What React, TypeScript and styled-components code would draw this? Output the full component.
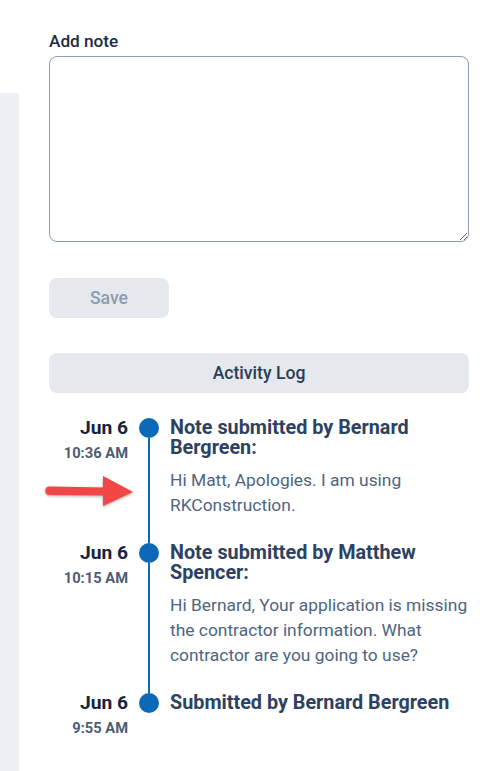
import styled, { createGlobalStyle } from 'styled-components';

const GlobalStyle = createGlobalStyle`
  body {
    margin: 0;
    background: #ffffff;
    font-family: Roboto, "Liberation Sans", Arial, sans-serif;
  }
`;

type Entry = {
  date: string;
  time: string;
  title: string;
  body?: string;
};

const entries: Entry[] = [
  {
    date: 'Jun 6',
    time: '10:36 AM',
    title: 'Note submitted by Bernard Bergreen:',
    body: 'Hi Matt, Apologies. I am using RKConstruction.',
  },
  {
    date: 'Jun 6',
    time: '10:15 AM',
    title: 'Note submitted by Matthew Spencer:',
    body: 'Hi Bernard, Your application is missing the contractor information. What contractor are you going to use?',
  },
  {
    date: 'Jun 6',
    time: '9:55 AM',
    title: 'Submitted by Bernard Bergreen',
  },
];

const App = () => {
  return (
    <Page>
      <GlobalStyle />
      <SideStrip />
      <Main>
        <Label htmlFor="note">Add note</Label>
        <NoteArea id="note" />
        <SaveButton type="button" disabled>
          Save
        </SaveButton>
        <LogHeader>Activity Log</LogHeader>
        <Timeline>
          {entries.map((entry, index) => {
            const last = index === entries.length - 1;
            return (
              <Item key={index}>
                <When>
                  <DateText>{entry.date}</DateText>
                  <TimeText>{entry.time}</TimeText>
                </When>
                <Rail>
                  <Dot />
                  {!last && <RailLine />}
                </Rail>
                <Content $last={last}>
                  <Title>{entry.title}</Title>
                  {entry.body && <Body>{entry.body}</Body>}
                </Content>
              </Item>
            );
          })}
        </Timeline>
      </Main>
      <Arrow width="100" height="45" viewBox="0 0 100 45">
        <path d="M9 16.5 L66 17.5 L66 25.5 L9 25 A4.3 4.3 0 0 1 9 16.5 Z" fill="#f24545" />
        <path d="M63 6 L93 22 L63 36 Z" fill="#f24545" />
      </Arrow>
    </Page>
  );
};

const Page = styled.div`
  position: relative;
  display: flex;
  min-height: 771px;
`;
const SideStrip = styled.div`
  width: 19px;
  margin-top: 93px;
  background-color: #eef0f4;
  flex-shrink: 0;
`;
const Main = styled.div`
  width: 420px;
  padding: 31px 0 0 30px;
  display: flex;
  flex-direction: column;
`;
const Label = styled.label`
  font-size: 17.2px;
  line-height: 20px;
  font-weight: 500;
  color: #1a2d45;
  margin-bottom: 5px;
`;
const NoteArea = styled.textarea`
  box-sizing: border-box;
  width: 420px;
  height: 186px;
  margin: 0;
  padding: 10px 12px;
  border: 1px solid #8d9eb2;
  border-radius: 8px;
  font-family: Roboto, "Liberation Sans", Arial, sans-serif;
  font-size: 16px;
  &:focus {
    outline: none;
  }
`;
const SaveButton = styled.button`
  margin-top: 36px;
  width: 120px;
  height: 40px;
  border: 0;
  border-radius: 8px;
  background-color: #e5e8ec;
  color: #8c9cb0;
  font-family: Roboto, "Liberation Sans", Arial, sans-serif;
  font-size: 17.6px;
  font-weight: 500;
`;
const LogHeader = styled.div`
  margin-top: 35px;
  height: 40px;
  border-radius: 8px;
  background-color: #e5e8ec;
  color: #2b3d55;
  font-size: 17.6px;
  font-weight: 500;
  display: flex;
  align-items: center;
  justify-content: center;
`;
const Timeline = styled.div`
  margin-top: 25px;
  display: flex;
  flex-direction: column;
`;
const Item = styled.div`
  display: grid;
  grid-template-columns: 79px 20px 1fr;
  column-gap: 11px;
`;
const When = styled.div`
  text-align: right;
  display: flex;
  flex-direction: column;
`;
const DateText = styled.div`
  font-size: 19.2px;
  line-height: 20px;
  font-weight: 700;
  color: #14243b;
`;
const TimeText = styled.div`
  margin-top: 5px;
  font-size: 14.7px;
  line-height: 20px;
  font-weight: 700;
  color: #4e5d72;
`;
const Rail = styled.div`
  display: flex;
  flex-direction: column;
  align-items: center;
`;
const Dot = styled.div`
  width: 20px;
  height: 20px;
  border-radius: 50%;
  background-color: #0b69b7;
  flex-shrink: 0;
`;
const RailLine = styled.div`
  width: 2px;
  flex: 1;
  background-color: #0b69b7;
`;
const Content = styled.div<{ $last: boolean }>`
  padding-bottom: ${({ $last }) => ($last ? '0' : '25px')};
`;
const Title = styled.div`
  font-size: 19.8px;
  line-height: 20px;
  font-weight: 700;
  color: #2d4261;
`;
const Body = styled.div`
  margin-top: 10px;
  font-size: 17.4px;
  line-height: 25px;
  color: #4e6580;
`;
const Arrow = styled.svg`
  position: absolute;
  left: 40px;
  top: 470px;
  filter: drop-shadow(0 1px 1.5px rgba(0, 0, 0, 0.35));
`;

export default App;
